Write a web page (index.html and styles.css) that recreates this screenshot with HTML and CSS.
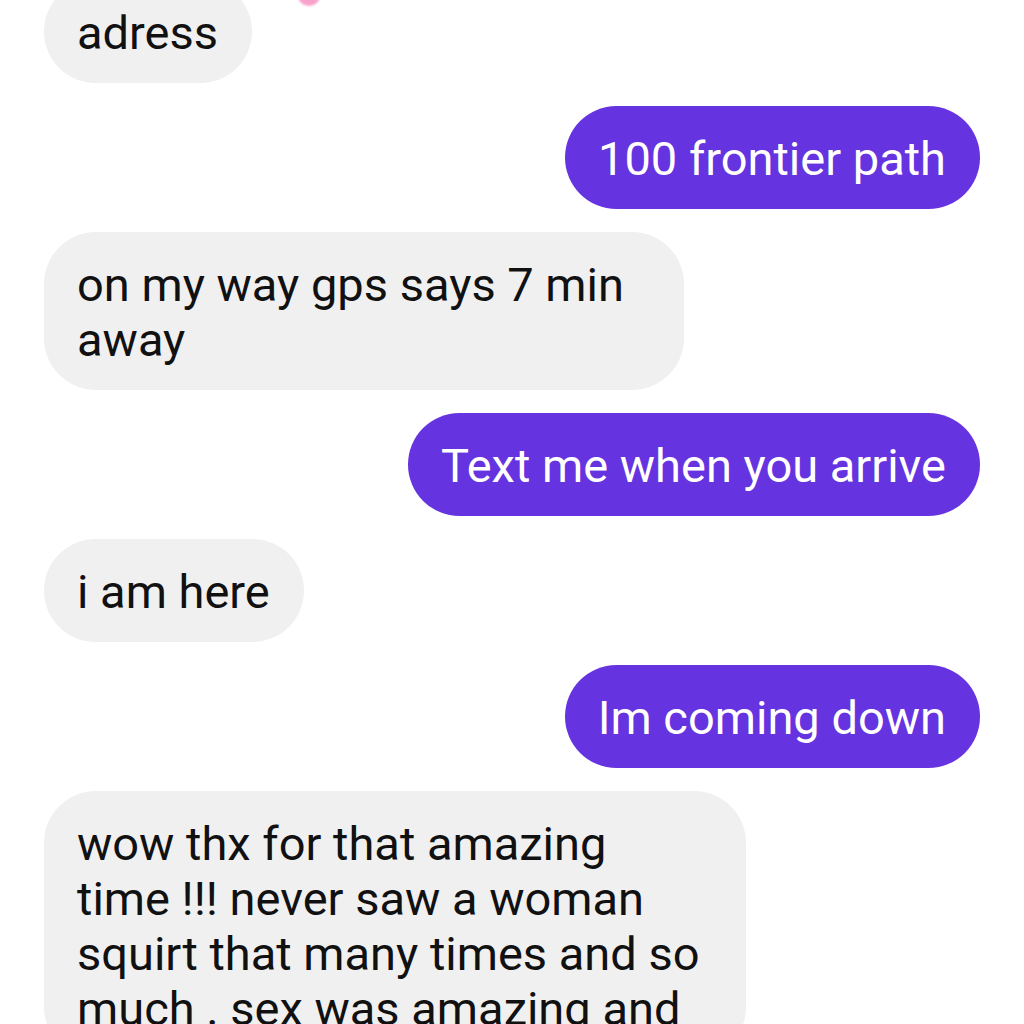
FILE: index.html
```html
<!DOCTYPE html>
<html lang="en">
<head>
    <meta charset="UTF-8">
    <meta name="viewport" content="width=device-width, initial-scale=1.0">
    <title>Messages</title>
    <link rel="stylesheet" href="styles.css">
</head>
<body>
    <div class="thread">
        <span class="reaction"></span>
        <div class="msg received">adress</div>
        <div class="msg sent">100 frontier path</div>
        <div class="msg received wide">on my way gps says 7 min away</div>
        <div class="msg sent">Text me when you arrive</div>
        <div class="msg received">i am here</div>
        <div class="msg sent">Im coming down</div>
        <div class="msg received wider">wow thx for that amazing time !!! never saw a woman squirt that many times and so much . sex was amazing and</div>
    </div>
</body>
</html>
```

FILE: styles.css
```css
* {
  box-sizing: border-box;
  margin: 0;
  padding: 0;
}

html, body {
  width: 100%;
  height: 100%;
  overflow: hidden;
}

body {
  background-color: #FFFFFF;
  font-family: Roboto, "Noto Sans", sans-serif;
  font-size: 47px;
  -webkit-font-smoothing: antialiased;
}

.thread {
  position: relative;
  display: flex;
  flex-direction: column;
  gap: 23px;
  padding: 0 44px;
  margin-top: -20px;
}

.reaction {
  position: absolute;
  top: 6px;
  left: 298px;
  width: 22px;
  height: 20px;
  border-radius: 50%;
  background-color: #F7A1CB;
  filter: blur(1px);
}

.msg {
  width: fit-content;
  padding: 25px 34px 23px 33px;
  line-height: 55px;
  border-radius: 52px;
}

.received {
  align-self: flex-start;
  background-color: #F0F0F0;
  color: #111111;
}

.sent {
  align-self: flex-end;
  background-color: #6533E0;
  color: #FFFFFF;
}

.wide {
  width: 640px;
}

.wider {
  width: 702px;
  padding-right: 40px;
}
```
